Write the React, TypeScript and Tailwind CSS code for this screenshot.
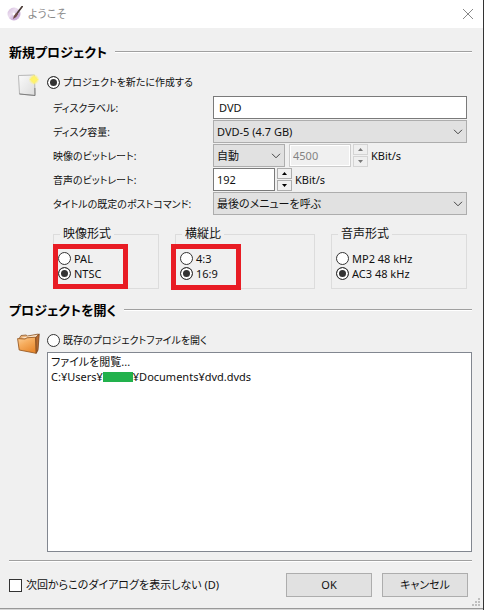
import { useState, type ReactNode } from 'react';

const options = {
  capacity: ['DVD-5 (4.7 GB)', 'DVD-9 (8.5 GB)'],
  bitrate: ['自動', '手動'],
  command: ['最後のメニューを呼ぶ', '次のタイトルを再生'],
};

function SectionTitle({ children }: { children: ReactNode }) {
  return (
    <h2 className="flex h-5 items-center gap-2 text-[13px] font-bold whitespace-nowrap text-black">
      {children}
      <span className="h-[2px] flex-1 border-t border-[#a0a0a0] bg-white" />
    </h2>
  );
}

interface RadioProps {
  name: string;
  label: string;
  checked: boolean;
  onSelect: () => void;
}

function Radio({ name, label, checked, onSelect }: RadioProps) {
  return (
    <label className="flex items-center gap-[3px] whitespace-nowrap">
      <input
        type="radio"
        name={name}
        checked={checked}
        onChange={onSelect}
        className="size-[13px] shrink-0 appearance-none rounded-full border border-[#333] bg-white checked:bg-[#333] checked:shadow-[inset_0_0_0_2px_white]"
      />
      {label}
    </label>
  );
}

interface RadioGroupProps {
  title: string;
  name: string;
  items: string[];
  initial: string;
  mark?: ReactNode;
}

function RadioGroup({ title, name, items, initial, mark }: RadioGroupProps) {
  const [value, setValue] = useState(initial);
  return (
    <fieldset className="relative h-[63px] min-w-0 border border-[#dcdcdc] pl-1">
      <legend className="ml-[2px] h-4 px-[3px] text-[12px] leading-4">{title}</legend>
      <div className="flex flex-col pt-[9px] leading-[15px]">
        {items.map((item) => (
          <Radio key={item} name={name} label={item} checked={value === item} onSelect={() => setValue(item)} />
        ))}
      </div>
      {mark}
    </fieldset>
  );
}

function Combo({ id, items, className = '' }: { id: string; items: string[]; className?: string }) {
  return (
    <div className={`relative h-[23px] ${className}`}>
      <select id={id} className="block h-full w-full appearance-none border border-[#adadad] bg-[#e1e1e1] pr-5 pl-[3px] outline-none">
        {items.map((item) => (
          <option key={item}>{item}</option>
        ))}
      </select>
      <svg viewBox="0 0 10 6" className="pointer-events-none absolute top-[9px] right-1 h-[6px] w-[10px]" fill="none" stroke="#444">
        <path d="M1 .8 5 4.8 9 .8" />
      </svg>
    </div>
  );
}

interface SpinProps {
  id: string;
  initial: number;
  disabled?: boolean;
}

function Spin({ id, initial, disabled = false }: SpinProps) {
  const [value, setValue] = useState(initial);
  const fill = disabled ? '#777' : '#000';
  const button = disabled
    ? 'flex h-[11px] w-[15px] items-center justify-center border border-[#d4d4d4] bg-[#efefef]'
    : 'flex h-[11px] w-[15px] items-center justify-center border border-[#adadad] bg-[#f0f0f0]';
  return (
    <>
      <input
        id={id}
        value={value}
        disabled={disabled}
        onChange={(e) => setValue(Number(e.target.value) || 0)}
        className="h-[23px] w-[62px] border border-[#7a7a7a] bg-white px-[3px] outline-none disabled:border-[#cccccc] disabled:bg-[#f0f0f0] disabled:text-[#838383] disabled:shadow-[inset_0_0_0_1px_white]"
      />
      <span className="ml-[2px] flex flex-col gap-px">
        <button type="button" aria-label="増やす" disabled={disabled} onClick={() => setValue(value + 1)} className={button}>
          <svg viewBox="0 0 5 3" className="h-[3px] w-[5px]" fill={fill}>
            <path d="M0 3 2.5 0 5 3Z" />
          </svg>
        </button>
        <button type="button" aria-label="減らす" disabled={disabled} onClick={() => setValue(value - 1)} className={button}>
          <svg viewBox="0 0 5 3" className="h-[3px] w-[5px]" fill={fill}>
            <path d="M0 0 2.5 3 5 0Z" />
          </svg>
        </button>
      </span>
      <span className="ml-[3px]">KBit/s</span>
    </>
  );
}

function AppIcon() {
  return (
    <svg viewBox="0 0 16 16" className="size-4">
      <defs>
        <linearGradient id="disc" x1="0" y1="0" x2="1" y2="1">
          <stop offset="0" stopColor="#d3b9dc" />
          <stop offset=".4" stopColor="#ecdff0" />
          <stop offset=".7" stopColor="#c9a9d6" />
          <stop offset="1" stopColor="#e2cdea" />
        </linearGradient>
      </defs>
      <circle cx="7" cy="8" r="6.5" fill="url(#disc)" />
      <circle cx="7" cy="8" r="1.5" fill="#fff" />
      <path d="M15.2.6 9.6 8" stroke="#4a3a36" strokeWidth="1.7" strokeLinecap="round" />
      <path d="M10.4 6.8 8.6 7.6Q6.8 9.4 6 13Q9.6 11.6 10.8 8.4Z" fill="#6d4a45" />
    </svg>
  );
}

function NewFileIcon() {
  return (
    <svg viewBox="0 0 24 28" className="h-7 w-6">
      <defs>
        <linearGradient id="page" x1="0" y1="0" x2="1" y2="1">
          <stop offset="0" stopColor="#fafafa" />
          <stop offset="1" stopColor="#dcdcdc" />
        </linearGradient>
        <radialGradient id="glow">
          <stop offset="0" stopColor="#fff450" />
          <stop offset=".5" stopColor="#fbf076" />
          <stop offset="1" stopColor="#fbf2a0" stopOpacity="0" />
        </radialGradient>
      </defs>
      <path d="M1.5 7.5 17.5 7 18 27.5 2.5 26Z" fill="url(#page)" stroke="#a8a8a8" strokeWidth=".8" />
      <path d="M2.5 26 18 27.5 17.9 20" fill="none" stroke="#777" strokeWidth=".9" />
      <circle cx="17" cy="11.5" r="5.5" fill="url(#glow)" />
      <path d="M17 6.5 18 10.2 22 11.5 18.3 12.7 17 16.5 15.7 12.7 12 11.5 15.8 10.2Z" fill="#fff36a" />
    </svg>
  );
}

function FolderIcon() {
  return (
    <svg viewBox="0 0 24 28" className="h-7 w-6">
      <defs>
        <linearGradient id="folder" x1="0" y1="0" x2=".6" y2="1">
          <stop offset="0" stopColor="#fcd09a" />
          <stop offset=".45" stopColor="#f6ad5e" />
          <stop offset="1" stopColor="#e8892f" />
        </linearGradient>
      </defs>
      <path d="M2.5 12 4 9.5 9 9 10.5 10 21.5 8 20.5 25 3 22Z" fill="#e9b077" stroke="#8a5a30" strokeWidth=".8" />
      <path d="M5 11.4 20 9 20 12 6 12.6Z" fill="#fae6cf" />
      <path d="M.6 12.6 8 13 10 11.8 18.6 11.2 19.2 27.3 2.2 24Z" fill="url(#folder)" stroke="#9a5a22" strokeWidth=".9" strokeLinejoin="round" />
      <path d="M18.8 11.2 22.3 8 21 24 19.3 27.3Z" fill="#b96c30" stroke="#74411b" strokeWidth=".7" />
    </svg>
  );
}

export default function App() {
  const [mode, setMode] = useState('new');

  return (
    <div className="flex min-h-screen flex-col border-r border-[#333] bg-[#f0f0f0] font-['Noto_Sans','Noto_Sans_CJK_JP',sans-serif] text-[11px] leading-4 text-[#111] [font-feature-settings:'palt']">
      <header className="flex h-7 items-center bg-white pr-[9px] pl-[7px] text-[#8a8a8a]">
        <AppIcon />
        <h1 className="ml-[5px] flex-1">ようこそ</h1>
        <button type="button" aria-label="閉じる">
          <svg viewBox="0 0 12 12" className="size-3" fill="none" stroke="#888">
            <path d="M1 1 11 11M11 1 1 11" />
          </svg>
        </button>
      </header>

      <main className="flex flex-1 flex-col pt-[14px] pr-[11px] pl-[9px]">
        <SectionTitle>新規プロジェクト</SectionTitle>

        <div className="mt-[10px] flex h-5 items-center pl-2">
          <NewFileIcon />
          <div className="ml-[6px] text-[10px]">
            <Radio name="mode" label="プロジェクトを新たに作成する" checked={mode === 'new'} onSelect={() => setMode('new')} />
          </div>
        </div>

        <div className="mt-1 grid grid-cols-[160px_1fr] items-center gap-y-px pr-[5px] pl-[44px] [&>label]:text-[10px] [&>label]:whitespace-nowrap">
          <label htmlFor="label">ディスクラベル:</label>
          <input id="label" defaultValue="DVD" className="h-[23px] w-full border border-[#7a7a7a] bg-white px-[5px] outline-none" />

          <label htmlFor="capacity">ディスク容量:</label>
          <Combo id="capacity" items={options.capacity} />

          <label htmlFor="video">映像のビットレート:</label>
          <div className="flex items-center">
            <Combo id="video" items={options.bitrate} className="mr-1 w-[72px]" />
            <Spin id="video-rate" initial={4500} disabled />
          </div>

          <label htmlFor="audio">音声のビットレート:</label>
          <div className="flex items-center">
            <Spin id="audio" initial={192} />
          </div>

          <label htmlFor="command">タイトルの既定のポストコマンド:</label>
          <Combo id="command" items={options.command} />
        </div>

        <div className="mt-[11px] grid grid-cols-[106fr_140fr_136fr] gap-4 pr-[5px] pl-[44px]">
          <RadioGroup
            title="映像形式"
            name="video-format"
            items={['PAL', 'NTSC']}
            initial="NTSC"
            mark={<span className="pointer-events-none absolute top-[2px] -left-px h-[45px] w-[75px] border-[5px] border-[#e81c24]" />}
          />
          <RadioGroup
            title="横縦比"
            name="aspect"
            items={['4:3', '16:9']}
            initial="16:9"
            mark={<span className="pointer-events-none absolute top-[2px] -left-[5px] h-[46px] w-[70px] border-[5px] border-[#e81c24]" />}
          />
          <RadioGroup title="音声形式" name="audio-format" items={['MP2 48 kHz', 'AC3 48 kHz']} initial="AC3 48 kHz" />
        </div>

        <div className="mt-[11px]">
          <SectionTitle>プロジェクトを開く</SectionTitle>
        </div>

        <div className="mt-[10px] flex h-5 items-center pl-2">
          <FolderIcon />
          <div className="ml-[6px] text-[10px]">
            <Radio name="mode" label="既存のプロジェクトファイルを開く" checked={mode === 'open'} onSelect={() => setMode('open')} />
          </div>
        </div>

        <ul className="mt-[2px] ml-[38px] flex-1 border border-[#828790] bg-white px-[3px] py-px leading-[15px]">
          <li>ファイルを閲覧...</li>
          <li className="flex items-center">
            C:¥Users¥
            <span className="h-[10px] w-[30px] bg-[#22b14c]" />
            ¥Documents¥dvd.dvds
          </li>
        </ul>

        <hr className="mt-2 h-[2px] border-t border-[#a0a0a0] bg-white" />

        <footer className="mt-[11px] mb-[11px] flex items-center gap-[10px] pr-1">
          <label className="flex flex-1 items-center gap-1 whitespace-nowrap">
            <input type="checkbox" className="size-[13px] appearance-none border border-[#333] bg-white checked:bg-[#333] checked:shadow-[inset_0_0_0_2px_white]" />
            次回からこのダイアログを表示しない (D)
          </label>
          <button type="button" className="h-6 w-[86px] border border-[#adadad] bg-[#e1e1e1]">
            OK
          </button>
          <button type="button" className="h-6 w-[86px] border border-[#adadad] bg-[#e1e1e1]">
            キャンセル
          </button>
        </footer>
      </main>

      <svg viewBox="0 0 8 8" className="absolute right-[4px] bottom-[4px] size-2" fill="#bfbfbf">
        <path d="M6 0h2v2H6zM3 3h2v2H3zM6 3h2v2H6zM0 6h2v2H0zM3 6h2v2H3zM6 6h2v2H6z" />
      </svg>
      <div className="h-[2px] border-t border-[#999] bg-[#d8d8d8]" />
    </div>
  );
}
